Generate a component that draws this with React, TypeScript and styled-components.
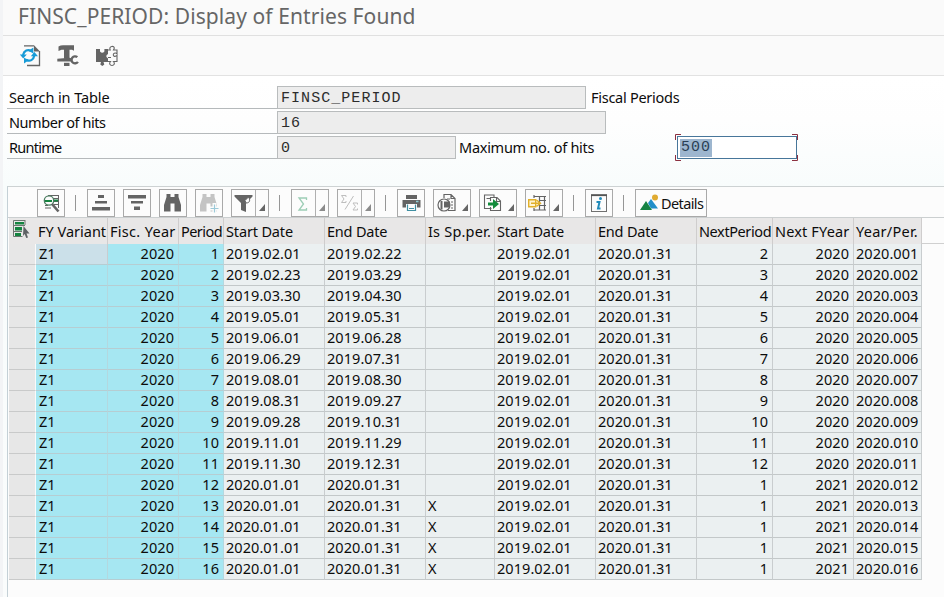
import React from "react";
import styled, { createGlobalStyle, css } from "styled-components";

const Global = createGlobalStyle`
  * { box-sizing: border-box; }
  body { margin: 0; background: #fff; }
`;

const Page = styled.div`
  width: 944px;
  height: 597px;
  overflow: hidden;
  display: flex;
  flex-direction: column;
  border-left: 3px solid #f3f4f6;
  background: linear-gradient(#ffffff 76px, #fefefe 120px, #f8fcfc 186px, #fafcfc 100%);
  font: 14.5px/20px "Noto Sans", "Open Sans", sans-serif;
  color: #0c0c0c;
  white-space: nowrap;
`;

const Title = styled.h1`
  margin: 0;
  height: 36px;
  padding-left: 15px;
  font-size: 21px;
  font-weight: 400;
  letter-spacing: 0.09px;
  line-height: 33px;
  color: #666;
  background: #fafafa;
  border-bottom: 1px solid #e0e0e0;
`;

const AppBar = styled.div`
  display: flex;
  height: 40px;
  padding: 7px 0 0 16px;
  gap: 12px;
  background: #fafafa;
  border-bottom: 1px solid #e2e2e2;
`;

const Form = styled.div`
  display: flex;
  flex-direction: column;
  gap: 2px;
  padding: 10px 0 0 4px;
  height: 110px;
`;

const FormRow = styled.div`
  display: flex;
  height: 23px;
  line-height: 23px;
`;

const Label = styled.div<{ $ls?: number }>`
  width: 270px;
  padding-left: 2px;
  border-bottom: 1px solid #b5b9bb;
  letter-spacing: ${(p) => p.$ls ?? -0.1}px;
`;

const Field = styled.div<{ $w: number }>`
  width: ${(p) => p.$w}px;
  padding: 1px 0 0 3px;
  background: #ededed;
  border: 1px solid #b9bcbd;
  font-family: "Liberation Mono", monospace;
  font-size: 15px;
  letter-spacing: 1.05px;
  line-height: 21px;
  color: #2c2c2c;
`;

const After = styled.div<{ $w: number; $gap: number }>`
  padding-left: ${(p) => p.$gap}px;
  width: ${(p) => p.$w}px;
  letter-spacing: -0.27px;
`;

const Input = styled.div`
  position: relative;
  width: 120px;
  padding: 2px 0 0 2px;
  background: #fff;
  border: 1px solid #47769a;
  font-family: "Liberation Mono", monospace;
  font-size: 15px;
  letter-spacing: 1.05px;
  line-height: 18px;
`;

const Selected = styled.span`
  display: block;
  width: 32px;
  height: 18px;
  padding-left: 1px;
  background: #9db6cf;
  color: #2a3f55;
`;

const Corners = styled.svg`
  position: absolute;
  left: -3px;
  top: -3px;
`;

const Panel = styled.section`
  flex: 1;
  margin-left: 4px;
  border-left: 1px solid #c4d0d6;
  border-top: 1px solid #cdd2d3;
  background: #fcfcfc;
`;

const Toolbar = styled.div`
  display: flex;
  height: 31px;
  padding: 2px 0 0 29px;
  border-bottom: 1px solid #cbcfd0;
`;

const Button = styled.button<{ $w?: number }>`
  display: flex;
  align-items: center;
  justify-content: flex-start;
  width: ${(p) => p.$w ?? 28}px;
  height: 28px;
  margin: 0 8px 0 0;
  padding: 0;
  border: 1px solid #a9a9a9;
  background: #fcfcfc;
  color: #111;
  font: inherit;
  flex: none;
`;

const Arrow = styled.span<{ $split?: boolean; $dim?: boolean }>`
  display: flex;
  align-items: flex-end;
  height: 26px;
  width: 12px;
  padding: 0 0 5px 4px;
  ${(p) => p.$split && css`border-left: 1px solid #b0b0b0; padding-left: 3px;`}
  &::after {
    content: "";
    border-left: 6px solid transparent;
    border-bottom: 7px solid ${(p) => (p.$dim ? "#8b8b8b" : "#666")};
  }
`;

const Separator = styled.i`
  width: 1px;
  height: 16px;
  margin: 6px 11px 0 2px;
  background: #969696;
  flex: none;
`;

const Grid = styled.div`
  padding-left: 1px;
`;

const columns = "27px 72px 71px 45px 101px 101px 69px 101px 101px 76px 81px 68px";

const HeadRow = styled.div`
  display: grid;
  grid-template-columns: ${columns};
  height: 26px;
  border-bottom: 1px solid #d0d0d0;
`;

const HeadCell = styled.div<{ $ls?: number }>`
  padding-left: 2px;
  line-height: 27px;
  background: #e8e7e7;
  border-right: 1px solid #cfcdcd;
  letter-spacing: ${(p) => p.$ls ?? 0}px;
`;

const CornerCell = styled.div`
  padding: 1px 0 0 3px;
  background: #e8e7e7;
`;

const Row = styled.div`
  display: grid;
  grid-template-columns: ${columns};
  height: 21px;
`;

const Selector = styled.div`
  background: #e7e7e7;
  border-bottom: 1px solid #c9caca;
  border-right: 1px solid #fafafa;
`;

const Cell = styled.div<{ $tone: "key" | "focus" | "plain"; $right?: boolean; $left?: number }>`
  padding: 0 4px 0 ${(p) => p.$left ?? 2}px;
  line-height: 18px;
  letter-spacing: 0.05px;
  text-align: ${(p) => (p.$right ? "right" : "left")};
  background: ${(p) => (p.$tone === "key" ? "#a6e7f2" : p.$tone === "focus" ? "#cbe0e9" : "#ebf0f1")};
  border-right: 1px solid ${(p) => (p.$tone === "key" ? "#b3d8df" : "#c9cdcf")};
  border-bottom: 1px solid ${(p) => (p.$tone === "plain" ? "#c3c8c9" : "#b6cdd2")};
`;

const Icon = ({ children, w = 26, h = 26 }: { children: React.ReactNode; w?: number; h?: number }) => (
  <svg width={w} height={h} viewBox={`0 0 ${w} ${h}`} fill="none">
    {children}
  </svg>
);

const G = "#646464";
const GREEN = "#148440";

const RefreshIcon = () => (
  <Icon>
    <path d="M5 2.8h10M8 22.5h12.5V8" stroke={G} strokeWidth="1.3" />
    <path d="M15 2.2l6 6.3h-6z" fill={G} />
    <path d="M4 12C5 7.5 9 6 12 8M15.3 12.5C14.5 17 11 18.8 7.5 17" stroke="#179bd7" strokeWidth="2.2" />
    <path d="M0.8 11.5h7l-3.6 4zM11.8 13.3l3.6-4.2 3.6 4.2zM5 14.8v5.8l5-3.6zM14.4 4.6v5.8l-5-2.6z" fill="#179bd7" />
  </Icon>
);

const ToolsIcon = () => (
  <Icon>
    <path d="M1.5 3.5q2-1.3 4.500-1.300h11v5.500l-2-1h-2.500v9h-5.500v-9h-2.500l-3 1.300z" fill={G} />
    <path d="M0.300 15.700l12-.9 3 .8v2.800H.3z" fill={G} />
    <path d="M7 19.800h5.500v3.200H7z" fill={G} />
    <path d="M20.300 14.200a3.500 3.500 0 1 0 .6 4.600" stroke={G} strokeWidth="2.400" />
  </Icon>
);

const PuzzleIcon = () => (
  <Icon>
    <path d="M1 6h4v2.500q2.200 2.500 4.400 0V6H13v5q-3.500 2 0 4.500V19H8.500l.8 2.500-2 1.500-2-1.500.7-2.500H1z" fill={G} />
    <path d="M13 7h2.200c-2-4 4.800-5 4-1.500L18.500 7H22v4c-1.500-2-4.500-.5-3.500 1.500s3 0 3.500 0v6h-3.500c2 2.200.3 4-1.500 4s-3.500-1.800-1.500-4H13M13 14.500h3" stroke={G} strokeWidth="1.100" />
  </Icon>
);

const MagnifyIcon = () => (
  <Icon>
    <path d="M10 5.500h11M15 8.500h5M16 11.500h4M16 14.500h4M7 15.500h3M7 18h6" stroke={G} />
    <path d="M20.500 5v13" stroke={G} />
    <path d="M6 11h8M16 10.500h4" stroke={GREEN} strokeWidth="2" />
    <circle cx="11" cy="10.500" r="4.700" stroke="#4d7e62" strokeWidth="1.300" />
    <path d="M14 14l6.500 7.500" stroke={G} strokeWidth="2.600" />
  </Icon>
);

const AscIcon = () => (
  <Icon>
    <path d="M10 5h6v3h-6zM7 11h12v2.500H7zM4 17h18v3.500H4z" fill={G} />
  </Icon>
);

const DescIcon = () => (
  <Icon>
    <path d="M4 5h18v3.500H4zM7 11h12v2.500H7zM10 16.500h6v3.500h-6z" fill={G} />
  </Icon>
);

const Binoculars = ({ color = G, plus = false }: { color?: string; plus?: boolean }) => (
  <Icon>
    <path d="M6.500 4h4v3h4V4h4v3l2.500 8v6.500h-6.500v-8h-4v8H4V15l2.500-8z" fill={color} />
    {plus && <path d="M18.500 13v10M14 18.500h10" stroke="#fcfcfc" strokeWidth="4" />}
    {plus && <path d="M18.500 14.500v8M14.500 18.500h8" stroke="#9cc9d8" strokeWidth="1.200" />}
  </Icon>
);

const FilterIcon = () => (
  <Icon w={23}>
    <path d="M2.500 5h18v1.500L14 13v9l-5-2v-7L2.500 6.500z" fill={G} />
    <path d="M13 10.500l3.500-3.500c2 3 1.500 6-2.500 6z" stroke={G} strokeWidth="1" fill="#fcfcfc" />
  </Icon>
);

const SumIcon = () => (
  <Icon w={23}>
    <path d="M14.500 10V8H7l4.500 6L7 20h7.500v-2" stroke="#9ccdb5" strokeWidth="1.300" />
  </Icon>
);

const SubtotalIcon = () => (
  <Icon w={23}>
    <path d="M8 7V5.500H3.500L6 9l-2.500 3.500H8V11M19.500 14.500V13H15l2.500 3.500L15 20h4.500v-1.500M15.500 6L7 19.500" stroke="#bebebe" />
  </Icon>
);

const PrintIcon = () => (
  <Icon>
    <path d="M8 5h11v4H8zM4.500 10h18v7.500H4.500z" fill={G} />
    <path d="M8 14h11v8H8z" fill="#fcfcfc" />
    <path d="M9.500 14.500v6h8v-6M11 18.500h5" stroke="#3f8fa2" strokeWidth="1.200" />
    <path d="M18 11.500h2.500" stroke="#8ccbd3" strokeWidth="1.500" />
  </Icon>
);

const ViewsIcon = () => (
  <Icon w={24}>
    <path d="M10 8V4.500h7l4 4v12h-7M17 4.500v4h4M13 9h3M17 12h2M17 15h2M17 18h2" stroke={G} strokeWidth="1.200" />
    <circle cx="10" cy="15" r="6" fill="#fcfcfc" stroke={G} strokeWidth="1.200" />
    <path d="M6.500 11h2v8.500h-2zM10 11.500h6v6h-6z" fill={G} />
  </Icon>
);

const ExportIcon = () => (
  <Icon w={24}>
    <path d="M14 7V5H4.500v13.500h7M6.500 8.500h4M10.500 11V7.500h6.500l3.500 3.500v9.500h-10V17M16.500 7.500v4h4" stroke={G} strokeWidth="1.100" />
    <path d="M8 12.600h5V9l6 5-6 5v-3.500H8z" fill="#138b3c" />
  </Icon>
);

const LayoutIcon = () => (
  <Icon w={23}>
    <path d="M8 6.500h12M13 10.500h7M14 15.500h6M8 20h12M13.500 6v14M18.500 6v14M8 5v3M8 18v3" stroke={G} strokeWidth="1.200" />
    <path d="M2.700 9.700h7v7h-7z" fill="#fff4d2" stroke="#e1b02a" strokeWidth="1.400" />
    <path d="M5 13.200h9M10.500 10l4 3.200-4 3.200" stroke="#e1b02a" strokeWidth="1.400" />
  </Icon>
);

const InfoIcon = () => (
  <Icon>
    <rect x="5.500" y="5" width="15" height="16.500" stroke="#707070" />
    <path d="M5 5.200h16" stroke="#555" strokeWidth="1.800" />
    <circle cx="14.500" cy="8.500" r="1.500" fill="#218bbb" />
    <path d="M10.500 12h3L12 18.500h2.500" stroke="#218bbb" strokeWidth="2" />
  </Icon>
);

const DetailsIcon = () => (
  <Icon>
    <path d="M12 13l3-4 7 9.500h-7z" fill="#218fc9" />
    <path d="M4 20l6-9 6 9z" fill="#168344" />
    <circle cx="19" cy="7.500" r="3" fill="#e0ab31" />
  </Icon>
);

const SelectAllIcon = () => (
  <Icon w={22} h={24}>
    <path d="M1.500 1.500h12M1.500 1.500v16h9M13 2v4M2 6.500h11M2 12.500h8" stroke="#6c7771" />
    <path d="M3 3h9v2.500H3zM3 8h7v3.500H3zM3 14h6v3H3z" fill={GREEN} />
    <path d="M11.500 7l6 7.500h-3l1.500 4-1.800.5-1.500-4-1.700 2z" fill="#5e6265" />
  </Icon>
);

const ButtonText = styled.span`
  margin-left: -1px;
  letter-spacing: -0.6px;
  line-height: 24px;
`;

const headings: [string, number][] = [
  ["FY Variant", 0], ["Fisc. Year", 0.3], ["Period", -0.55], ["Start Date", -0.15], ["End Date", -0.2],
  ["Is Sp.per.", 0.2], ["Start Date", -0.15], ["End Date", -0.2], ["NextPeriod", -0.4],
  ["Next FYear", 0.15], ["Year/Per.", 0.25],
];

const periods: [string, string][] = [
  ["2019.02.01", "2019.02.22"], ["2019.02.23", "2019.03.29"], ["2019.03.30", "2019.04.30"],
  ["2019.05.01", "2019.05.31"], ["2019.06.01", "2019.06.28"], ["2019.06.29", "2019.07.31"],
  ["2019.08.01", "2019.08.30"], ["2019.08.31", "2019.09.27"], ["2019.09.28", "2019.10.31"],
  ["2019.11.01", "2019.11.29"], ["2019.11.30", "2019.12.31"], ["2020.01.01", "2020.01.31"],
  ["2020.01.01", "2020.01.31"], ["2020.01.01", "2020.01.31"], ["2020.01.01", "2020.01.31"],
  ["2020.01.01", "2020.01.31"],
];

export default function App() {
  return (
    <>
      <Global />
      <Page>
        <Title>FINSC_PERIOD: Display of Entries Found</Title>
        <AppBar>
          <RefreshIcon />
          <ToolsIcon />
          <PuzzleIcon />
        </AppBar>
        <Form>
          <FormRow>
            <Label>Search in Table</Label>
            <Field $w={309}>FINSC_PERIOD</Field>
            <After $w={120} $gap={5}>Fiscal Periods</After>
          </FormRow>
          <FormRow>
            <Label $ls={-0.45}>Number of hits</Label>
            <Field $w={329}>16</Field>
          </FormRow>
          <FormRow>
            <Label $ls={-0.75}>Runtime</Label>
            <Field $w={179}>0</Field>
            <After $w={221} $gap={3}>Maximum no. of hits</After>
            <Input>
              <Selected>500</Selected>
              <Corners width="123" height="27" viewBox="0 0 123 27" fill="none">
                <path d="M.5 6V.5H6M117 .5h5.500V6M.5 21v5.500H6M117 26.500h5.500V21" stroke="#8c3040" />
              </Corners>
            </Input>
          </FormRow>
        </Form>
        <Panel>
          <Toolbar>
            <Button><MagnifyIcon /></Button>
            <Separator />
            <Button><AscIcon /></Button>
            <Button><DescIcon /></Button>
            <Button><Binoculars /></Button>
            <Button><Binoculars color="#c4c4c4" plus /></Button>
            <Button $w={38}><FilterIcon /><Arrow $split /></Button>
            <Separator />
            <Button $w={38}><SumIcon /><Arrow $split $dim /></Button>
            <Button $w={38}><SubtotalIcon /><Arrow $split $dim /></Button>
            <Separator />
            <Button><PrintIcon /></Button>
            <Button $w={38}><ViewsIcon /><Arrow /></Button>
            <Button $w={38}><ExportIcon /><Arrow /></Button>
            <Button $w={38}><LayoutIcon /><Arrow $split /></Button>
            <Separator />
            <Button><InfoIcon /></Button>
            <Separator />
            <Button $w={72}><DetailsIcon /><ButtonText>Details</ButtonText></Button>
          </Toolbar>
          <Grid>
            <HeadRow>
              <CornerCell><SelectAllIcon /></CornerCell>
              {headings.map(([text, ls], i) => <HeadCell key={i} $ls={ls}>{text}</HeadCell>)}
            </HeadRow>
            {periods.map(([start, end], i) => (
              <Row key={i}>
                <Selector />
                <Cell $tone={i === 0 ? "focus" : "key"} $left={3}>Z1</Cell>
                <Cell $tone="key" $right>2020</Cell>
                <Cell $tone="key" $right>{i + 1}</Cell>
                <Cell $tone="plain">{start}</Cell>
                <Cell $tone="plain">{end}</Cell>
                <Cell $tone="plain">{i >= 12 ? "X" : ""}</Cell>
                <Cell $tone="plain">2019.02.01</Cell>
                <Cell $tone="plain">2020.01.31</Cell>
                <Cell $tone="plain" $right>{i < 11 ? i + 2 : 1}</Cell>
                <Cell $tone="plain" $right>{i < 11 ? 2020 : 2021}</Cell>
                <Cell $tone="plain">{`2020.${String(i + 1).padStart(3, "0")}`}</Cell>
              </Row>
            ))}
          </Grid>
        </Panel>
      </Page>
    </>
  );
}
